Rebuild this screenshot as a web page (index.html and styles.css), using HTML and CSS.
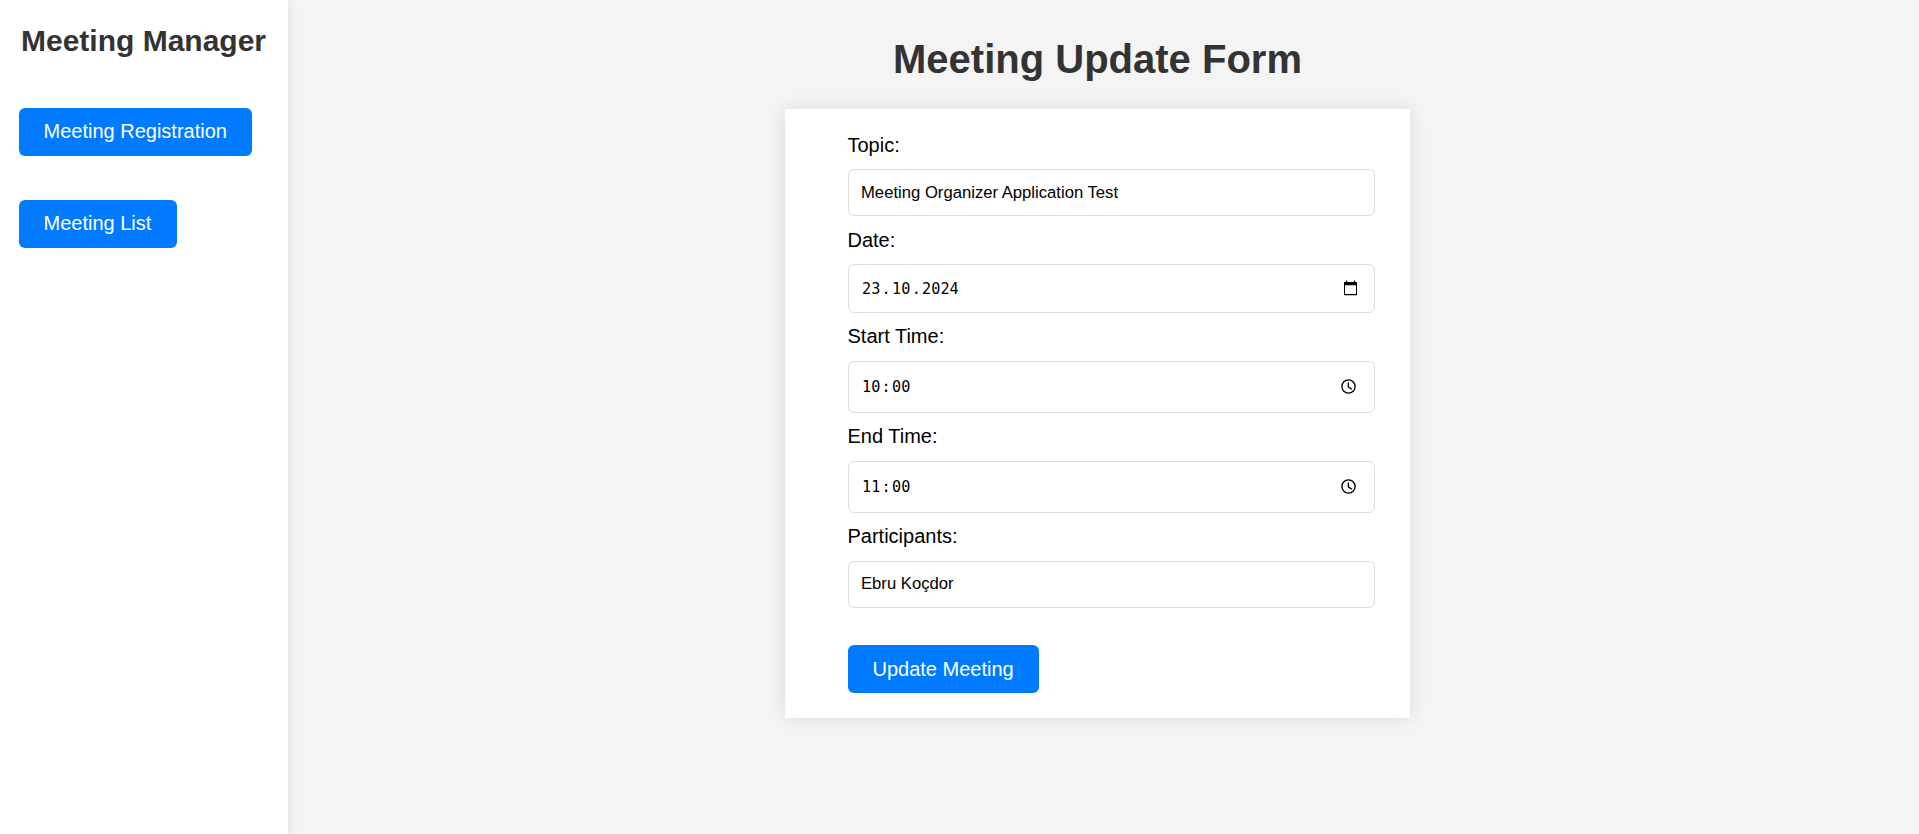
FILE: index.html
```html
<!DOCTYPE html>
<html lang="en">
<head>
<meta charset="utf-8">
<title>Meeting Manager</title>
<link rel="stylesheet" href="styles.css">
</head>
<body>
<aside class="sidebar">
  <h2 class="brand">Meeting Manager</h2>
  <nav class="nav">
    <button class="btn">Meeting Registration</button>
    <button class="btn">Meeting List</button>
  </nav>
</aside>
<main class="main">
  <h1 class="title">Meeting Update Form</h1>
  <form class="card">
    <label class="label" for="topic">Topic:</label>
    <input class="field" id="topic" type="text" value="Meeting Organizer Application Test">
    <span class="label">Date:</span>
    <div class="field picker picker-date">
      <span class="digits"><span>23</span><span>.</span><span>10</span><span>.</span><span>2024</span></span>
      <svg class="icon icon-date" viewBox="0 0 17 17"><path d="M3 3.500V1.500h1.200v2zM10.800 3.500v-2H12v2z"/><path fill-rule="evenodd" d="M1.500 3h12a.5.5 0 0 1 .5.500v12.300a.5.5 0 0 1-.5.500h-12a.5.5 0 0 1-.5-.500V3.500a.5.5 0 0 1 .5-.500zM2 6.300V15h11V6.300z"/></svg>
    </div>
    <span class="label label-high">Start Time:</span>
    <div class="field picker picker-time">
      <span class="digits"><span>10</span><span>:</span><span>00</span></span>
      <svg class="icon icon-time" viewBox="0 0 24 24"><circle cx="12" cy="12" r="9.300"/><path d="M11.800 6.500v6l5 3.400"/></svg>
    </div>
    <span class="label label-high">End Time:</span>
    <div class="field picker picker-time">
      <span class="digits"><span>11</span><span>:</span><span>00</span></span>
      <svg class="icon icon-time" viewBox="0 0 24 24"><circle cx="12" cy="12" r="9.300"/><path d="M11.800 6.500v6l5 3.400"/></svg>
    </div>
    <label class="label label-high" for="people">Participants:</label>
    <input class="field field-last" id="people" type="text" value="Ebru Koçdor">
    <button class="btn submit" type="button">Update Meeting</button>
  </form>
</main>
</body>
</html>
```
FILE: styles.css
```css
* {
  box-sizing: border-box;
}

body {
  margin: 0;
  display: flex;
  height: 834px;
  overflow: hidden;
  background: #f4f4f4;
  font-family: "Liberation Sans", Arial, sans-serif;
}

.sidebar {
  position: relative;
  flex: none;
  width: 288px;
  padding: 24px 19px;
  background: #fff;
  box-shadow: 0 0 12px rgba(0, 0, 0, 0.1);
}

.brand {
  margin: 0 0 50px 2px;
  font-size: 30px;
  line-height: 34px;
  color: #333;
  white-space: nowrap;
}

.nav {
  display: flex;
  flex-direction: column;
  align-items: flex-start;
  gap: 44px;
}

.btn {
  height: 48px;
  padding: 0 25.5px 2px 24.5px;
  border: 0;
  border-radius: 6px;
  background: #007bff;
  color: #fff;
  font: 20px "Liberation Sans", Arial, sans-serif;
}

.main {
  flex: 1;
  display: flex;
  flex-direction: column;
  align-items: center;
  padding: 36px 12px 0 0;
}

.title {
  margin: 0 0 27px;
  font-size: 40px;
  line-height: 46px;
  color: #333;
}

.card {
  width: 625px;
  height: 609px;
  padding: 25px 35px 25px 63px;
  background: #fff;
  box-shadow: 0 0 18px rgba(0, 0, 0, 0.1);
}

.label {
  display: block;
  margin: 0 0 12px -0.5px;
  font-size: 20px;
  line-height: 23px;
  color: #000;
}

.label-high {
  margin-top: -1px;
  margin-bottom: 13px;
}

.field {
  display: block;
  width: 527px;
  height: 47px;
  margin-bottom: 13px;
  padding: 0 12px;
  border: 1px solid #ddd;
  border-radius: 6px;
  background: #fff;
  color: #000;
  font: 16.67px "Liberation Sans", Arial, sans-serif;
}

.field-last {
  padding-bottom: 2px;
}

.picker {
  display: flex;
  align-items: center;
  justify-content: space-between;
  padding: 0 14px 0 13px;
}

.picker-date {
  height: 49px;
}

.picker-time {
  height: 52px;
  padding: 0 17px 1px 13px;
}

.digits {
  display: flex;
  gap: 1.3px;
  font: 15.2px "DejaVu Sans Mono", monospace;
}

.icon {
  width: 17px;
  height: 17px;
}

.icon-date {
  margin-bottom: 2px;
}

.icon-time {
  fill: none;
  stroke: #000;
  stroke-width: 1.9;
}

.submit {
  display: block;
  margin-top: 37px;
  padding-bottom: 0;
}
```
